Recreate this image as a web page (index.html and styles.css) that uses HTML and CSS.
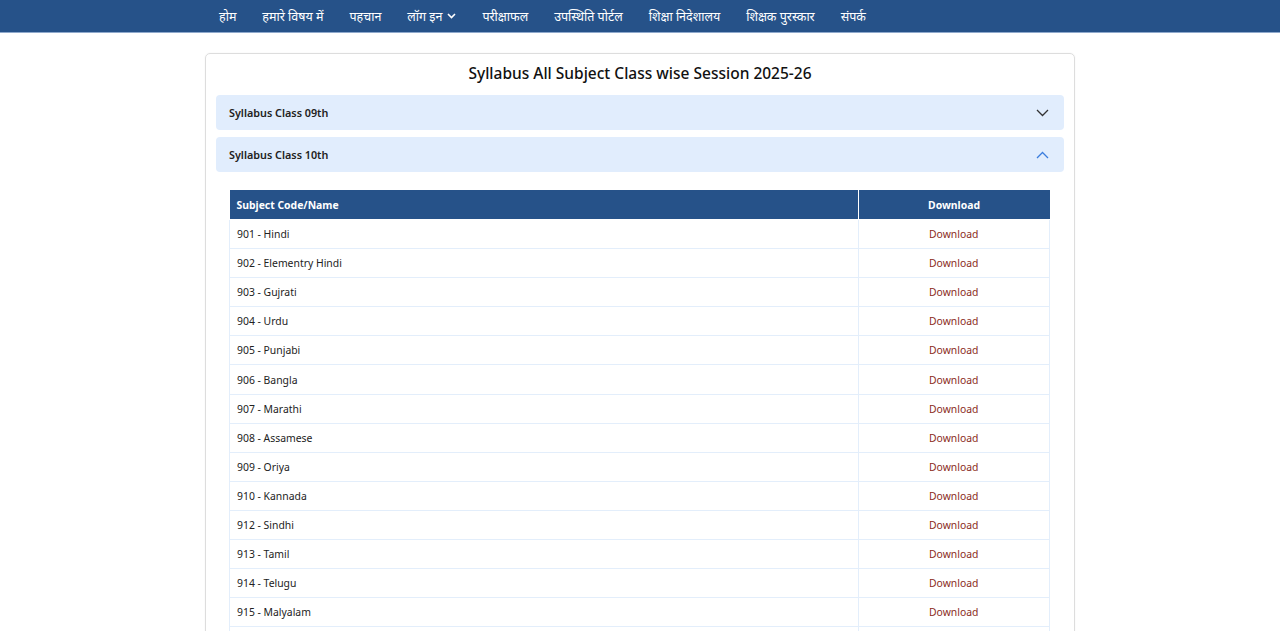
FILE: index.html
```html
<!DOCTYPE html>
<html lang="hi">
<head>
    <meta charset="UTF-8">
    <meta name="viewport" content="width=device-width, initial-scale=1.0">
    <title>Syllabus</title>
    <link rel="stylesheet" href="styles.css">
</head>
<body>
    <nav class="topnav">
        <ul class="menu">
            <li>होम</li>
            <li>हमारे विषय में</li>
            <li>पहचान</li>
            <li>लॉग इन
                <svg class="caret" width="9" height="6" viewBox="0 0 9 6"><path d="M1 1l3.5 3.5L8 1" fill="none" stroke="#fff" stroke-width="1.6"/></svg>
            </li>
            <li>परीक्षाफल</li>
            <li>उपस्थिति पोर्टल</li>
            <li>शिक्षा निदेशालय</li>
            <li>शिक्षक पुरस्कार</li>
            <li>संपर्क</li>
        </ul>
    </nav>

    <main class="page">
        <div class="card">
            <h2 class="card-title">Syllabus All Subject Class wise Session 2025-26</h2>

            <div class="acc-item">
                <div class="acc-head">
                    <span>Syllabus Class 09th</span>
                    <svg width="13" height="8" viewBox="0 0 13 8"><path d="M1 1l5.5 5.5L12 1" fill="none" stroke="#333" stroke-width="1.3"/></svg>
                </div>
            </div>

            <div class="acc-item">
                <div class="acc-head">
                    <span>Syllabus Class 10th</span>
                    <svg width="13" height="8" viewBox="0 0 13 8"><path d="M1 7l5.5-5.5L12 7" fill="none" stroke="#3b7ddd" stroke-width="1.3"/></svg>
                </div>
                <div class="acc-body">
                    <table class="subjects">
                        <thead>
                            <tr><th>Subject Code/Name</th><th class="dl">Download</th></tr>
                        </thead>
                        <tbody>
                            <tr><td>901 - Hindi</td><td class="dl"><a href="#">Download</a></td></tr>
                            <tr><td>902 - Elementry Hindi</td><td class="dl"><a href="#">Download</a></td></tr>
                            <tr><td>903 - Gujrati</td><td class="dl"><a href="#">Download</a></td></tr>
                            <tr><td>904 - Urdu</td><td class="dl"><a href="#">Download</a></td></tr>
                            <tr><td>905 - Punjabi</td><td class="dl"><a href="#">Download</a></td></tr>
                            <tr><td>906 - Bangla</td><td class="dl"><a href="#">Download</a></td></tr>
                            <tr><td>907 - Marathi</td><td class="dl"><a href="#">Download</a></td></tr>
                            <tr><td>908 - Assamese</td><td class="dl"><a href="#">Download</a></td></tr>
                            <tr><td>909 - Oriya</td><td class="dl"><a href="#">Download</a></td></tr>
                            <tr><td>910 - Kannada</td><td class="dl"><a href="#">Download</a></td></tr>
                            <tr><td>912 - Sindhi</td><td class="dl"><a href="#">Download</a></td></tr>
                            <tr><td>913 - Tamil</td><td class="dl"><a href="#">Download</a></td></tr>
                            <tr><td>914 - Telugu</td><td class="dl"><a href="#">Download</a></td></tr>
                            <tr><td>915 - Malyalam</td><td class="dl"><a href="#">Download</a></td></tr>
                            <tr><td>916 - Sanskrit</td><td class="dl"><a href="#">Download</a></td></tr>
                        </tbody>
                    </table>
                </div>
            </div>
        </div>
    </main>
</body>
</html>
```

FILE: styles.css
```css
body {
    font-family: "Noto Sans", "Open Sans", sans-serif;
    background-color: #fff;
    color: #222;
    margin: 0;
    padding: 0;
}

/* top menu */
.topnav {
    background-color: #265289;
    border-bottom: 1px solid #8fa9cc;
    height: 32px;
}

.menu {
    list-style: none;
    margin: 0;
    padding: 0 0 0 219px;
    display: flex;
    gap: 26px;
    height: 32px;
    align-items: center;
}

.menu li {
    color: #fff;
    font-size: 12.5px;
    display: flex;
    align-items: center;
    gap: 5px;
}

.page {
    padding-top: 20px;
}

.card {
    width: 848px;
    margin: 0 auto;
    border: 1px solid #ddd;
    border-radius: 5px;
    padding: 7px 10px 0;
    box-shadow: 0 0 2px rgba(0, 0, 0, 0.05);
}

.card-title {
    margin: 0 0 10px;
    text-align: center;
    font-size: 15.5px;
    font-weight: 500;
    line-height: 24px;
    color: #111;
}

.acc-item {
    margin-bottom: 7px;
}

.acc-head {
    background-color: #e1edfd;
    border-radius: 4px;
    height: 35px;
    padding: 0 15px 0 13px;
    display: flex;
    align-items: center;
    justify-content: space-between;
    font-size: 10.8px;
    font-weight: 600;
    color: #222;
}

.acc-body {
    padding: 18px 14px 0 13px;
}

.subjects {
    width: 100%;
    border-collapse: collapse;
    font-size: 10.4px;
}

.subjects th {
    background-color: #265289;
    color: #fff;
    font-weight: 700;
    text-align: left;
    height: 29px;
    padding: 0 7px;
    border: 1px solid #fff;
    border-top: none;
}

.subjects th:first-child {
    border-left: none;
    width: 614px;
}

.subjects th:last-child {
    border-right: none;
}

.subjects td {
    height: 28.1px;
    padding: 0 7px;
    border: 1px solid #e3eefb;
}

.subjects .dl {
    text-align: center;
}

.subjects a {
    color: #8b2b1b;
    text-decoration: none;
}
```
